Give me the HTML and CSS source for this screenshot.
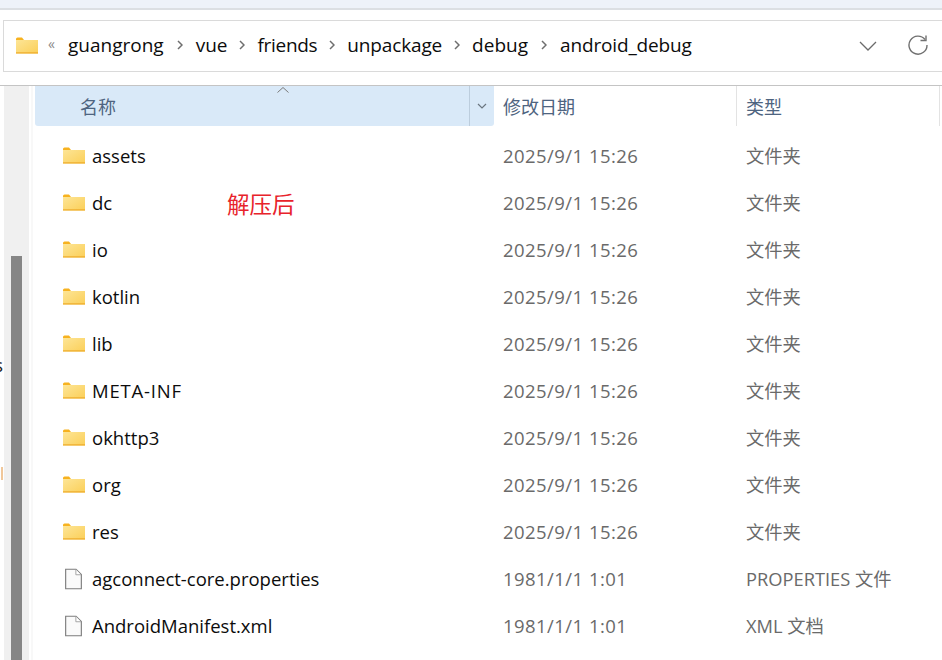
FILE: index.html
```html
<!DOCTYPE html>
<html lang="zh">
<head>
<meta charset="utf-8">
<title>android_debug</title>
<link rel="stylesheet" href="styles.css">
</head>
<body>
<div class="titlebar"></div>
<div class="toolbar">
  <div class="address">
    <svg class="addr-folder" viewBox="0 0 22 17"><use href="#f"/></svg>
    <span class="chev-dbl">«</span>
    <span class="crumb">guangrong</span><svg class="sep sep-wide" viewBox="0 0 6 10"><path d="M1 1l4 4-4 4" fill="none" stroke="#6e6e6e" stroke-width="1.5"/></svg>
    <span class="crumb">vue</span><svg class="sep" viewBox="0 0 6 10"><path d="M1 1l4 4-4 4" fill="none" stroke="#6e6e6e" stroke-width="1.5"/></svg>
    <span class="crumb tight-2">friends</span><svg class="sep" viewBox="0 0 6 10"><path d="M1 1l4 4-4 4" fill="none" stroke="#6e6e6e" stroke-width="1.5"/></svg>
    <span class="crumb tight-1">unpackage</span><svg class="sep" viewBox="0 0 6 10"><path d="M1 1l4 4-4 4" fill="none" stroke="#6e6e6e" stroke-width="1.5"/></svg>
    <span class="crumb">debug</span><svg class="sep sep-wide" viewBox="0 0 6 10"><path d="M1 1l4 4-4 4" fill="none" stroke="#6e6e6e" stroke-width="1.5"/></svg>
    <span class="crumb tight-1">android_debug</span>
    <svg class="addr-down" viewBox="0 0 18 10"><path d="M1 1l8 8 8-8" fill="none" stroke="#6b6b6b" stroke-width="1.3"/></svg>
    <svg class="addr-refresh" viewBox="0 0 20 20"><path d="M17 4.500A9 9 0 1 0 19 10" fill="none" stroke="#707070" stroke-width="1.400"/><path d="M18 .5v5h-5.500" fill="none" stroke="#707070" stroke-width="1.400"/></svg>
  </div>
</div>
<div class="main">
  <div class="side">
    <span class="clip-s">s</span><span class="clip-mark"></span>
    <div class="scroll"><div class="thumb"></div></div>
    <div class="sliver"></div>
  </div>
  <div class="list">
    <div class="head">
      <div class="h-name"><span class="h-label">名称</span><svg class="sort" viewBox="0 0 12 6"><path d="M.5 5.500L6 .5l5.500 5" fill="none" stroke="#7a7a7a"/></svg><span class="h-drop"><svg viewBox="0 0 10 6"><path d="M1 1l4 4 4-4" fill="none" stroke="#6b7680" stroke-width="1.200"/></svg></span></div>
      <div class="h-date">修改日期</div>
      <div class="h-type">类型</div>
    </div>
    <div class="rows">
      <div class="row"><svg class="ico-folder" viewBox="0 0 22 17"><use href="#f"/></svg><span class="name">assets</span><span class="date">2025/9/1 15:26</span><span class="type">文件夹</span></div>
      <div class="row"><svg class="ico-folder" viewBox="0 0 22 17"><use href="#f"/></svg><span class="name">dc</span><span class="date">2025/9/1 15:26</span><span class="type">文件夹</span><span class="note">解压后</span></div>
      <div class="row"><svg class="ico-folder" viewBox="0 0 22 17"><use href="#f"/></svg><span class="name">io</span><span class="date">2025/9/1 15:26</span><span class="type">文件夹</span></div>
      <div class="row"><svg class="ico-folder" viewBox="0 0 22 17"><use href="#f"/></svg><span class="name">kotlin</span><span class="date">2025/9/1 15:26</span><span class="type">文件夹</span></div>
      <div class="row"><svg class="ico-folder" viewBox="0 0 22 17"><use href="#f"/></svg><span class="name">lib</span><span class="date">2025/9/1 15:26</span><span class="type">文件夹</span></div>
      <div class="row"><svg class="ico-folder" viewBox="0 0 22 17"><use href="#f"/></svg><span class="name meta">META-INF</span><span class="date">2025/9/1 15:26</span><span class="type">文件夹</span></div>
      <div class="row"><svg class="ico-folder" viewBox="0 0 22 17"><use href="#f"/></svg><span class="name">okhttp3</span><span class="date">2025/9/1 15:26</span><span class="type">文件夹</span></div>
      <div class="row"><svg class="ico-folder" viewBox="0 0 22 17"><use href="#f"/></svg><span class="name">org</span><span class="date">2025/9/1 15:26</span><span class="type">文件夹</span></div>
      <div class="row"><svg class="ico-folder" viewBox="0 0 22 17"><use href="#f"/></svg><span class="name">res</span><span class="date">2025/9/1 15:26</span><span class="type">文件夹</span></div>
      <div class="row"><svg class="ico-file" viewBox="0 0 18 22"><use href="#d"/></svg><span class="name">agconnect-core.properties</span><span class="date">1981/1/1 1:01</span><span class="type">PROPERTIES 文件</span></div>
      <div class="row"><svg class="ico-file" viewBox="0 0 18 22"><use href="#d"/></svg><span class="name">AndroidManifest.xml</span><span class="date">1981/1/1 1:01</span><span class="type">XML 文档</span></div>
    </div>
  </div>
</div>
<svg class="defs" aria-hidden="true">
  <defs>
    <linearGradient id="g" x1="0" y1="0" x2="1" y2="1"><stop offset="0" stop-color="#fde596"/><stop offset="1" stop-color="#fbcf58"/></linearGradient>
    <g id="f"><path d="M0 2A1.500 1.500 0 0 1 1.500 .5h4.500l2 2.500H0z" fill="#f7b21f"/><rect y="3" width="22" height="13.500" fill="url(#g)"/><rect y="15.300" width="22" height="1.200" fill="#eeab2c"/></g>
    <g id="d"><path d="M.7 .7h11L17.300 6.300V21.300H.7z" fill="#fafafa" stroke="#7c7c7c" stroke-width="1.200"/><path d="M11.500 1v5.500H17" fill="#fff" stroke="#a0a0a0"/></g>
  </defs>
</svg>
</body>
</html>
```
FILE: styles.css
```css
html, body { margin: 0; padding: 0; }
body { width: 942px; height: 660px; overflow: hidden; background: #fff; font-family: "Open Sans", "Noto Sans CJK SC", sans-serif; }
.titlebar { height: 8px; background: #eef2f9; border-bottom: 2px solid #dcdfe3; }
.toolbar { height: 76px; padding: 10px 0 0 3px; box-sizing: border-box; border-bottom: 1px solid #c4c4c4; }
.address { height: 52px; box-sizing: border-box; border: 1px solid #dadada; border-right: 0; display: flex; align-items: center; padding: 0 0 2px 12px; color: #0c0c0c; font-size: 19px; position: relative; }
.addr-folder { width: 22px; height: 17px; margin-right: 10px; }
.chev-dbl { color: #8a8a8a; font-size: 14px; width: 20px; margin-top: -3px; }
.tight-1 { letter-spacing: -.15px; }
.tight-2 { letter-spacing: -.3px; }
.sep { width: 6px; height: 10px; margin: 0 12px; flex: none; }
.sep-wide { margin: 0 13px; }
.addr-down { position: absolute; left: 855px; top: 20px; width: 18px; height: 10px; }
.addr-refresh { position: absolute; left: 904px; top: 14px; width: 20px; height: 20px; }
.main { display: flex; height: 574px; }
.side { width: 35px; flex: none; box-sizing: border-box; padding-left: 4px; display: flex; position: relative; }
.clip-s { position: absolute; left: -6px; top: 266px; font-size: 19px; color: #222; line-height: 26px; }
.clip-mark { position: absolute; left: 1px; top: 381px; width: 2px; height: 13px; background: #f0c79a; }
.scroll { width: 25px; box-sizing: border-box; padding-left: 7px; background: #f0f0f0; }
.thumb { width: 11px; height: 404px; margin-top: 170px; background: #868686; }
.sliver { width: 2px; margin-left: 2px; background: #f8f8f8; }
.list { flex: 1; }
.head { height: 40px; display: flex; font-size: 18px; color: #4e6480; }
.h-name { width: 459px; background: #d9e9f8; border-radius: 0 0 3px 3px; box-sizing: border-box; padding-left: 45px; line-height: 42px; position: relative; }
.sort { position: absolute; left: 242px; top: 1px; width: 12px; height: 6px; }
.h-drop { position: absolute; right: 0; top: 0; width: 25px; height: 40px; border-left: 1px solid #bccddd; display: flex; align-items: center; justify-content: center; box-sizing: border-box; }
.h-drop svg { width: 10px; height: 6px; }
.h-date { width: 243px; box-sizing: border-box; padding-left: 9px; line-height: 42px; border-right: 1px solid #e3e3e3; }
.h-type { width: 203px; box-sizing: border-box; padding-left: 9px; line-height: 42px; border-right: 1px solid #e3e3e3; }
.rows { padding-top: 7px; }
.row { height: 47px; position: relative; font-size: 18.5px; }
.ico-folder { position: absolute; left: 28px; top: 14px; width: 22px; height: 17px; }
.ico-file { position: absolute; left: 30px; top: 12px; width: 17px; height: 22px; }
.name { position: absolute; left: 57px; top: 10px; color: #0c0c0c; line-height: 25px; }
.meta { letter-spacing: .8px; }
.date { position: absolute; left: 468px; top: 10px; color: #6a6a6a; line-height: 25px; letter-spacing: .45px; }
.type { position: absolute; left: 711px; top: 10px; color: #6a6a6a; line-height: 25px; white-space: nowrap; font-size: 18.3px; }
.note { position: absolute; left: 192px; top: 12px; color: #e8232b; font-size: 22.5px; line-height: 26px; }
.defs { position: absolute; width: 0; height: 0; }
```
